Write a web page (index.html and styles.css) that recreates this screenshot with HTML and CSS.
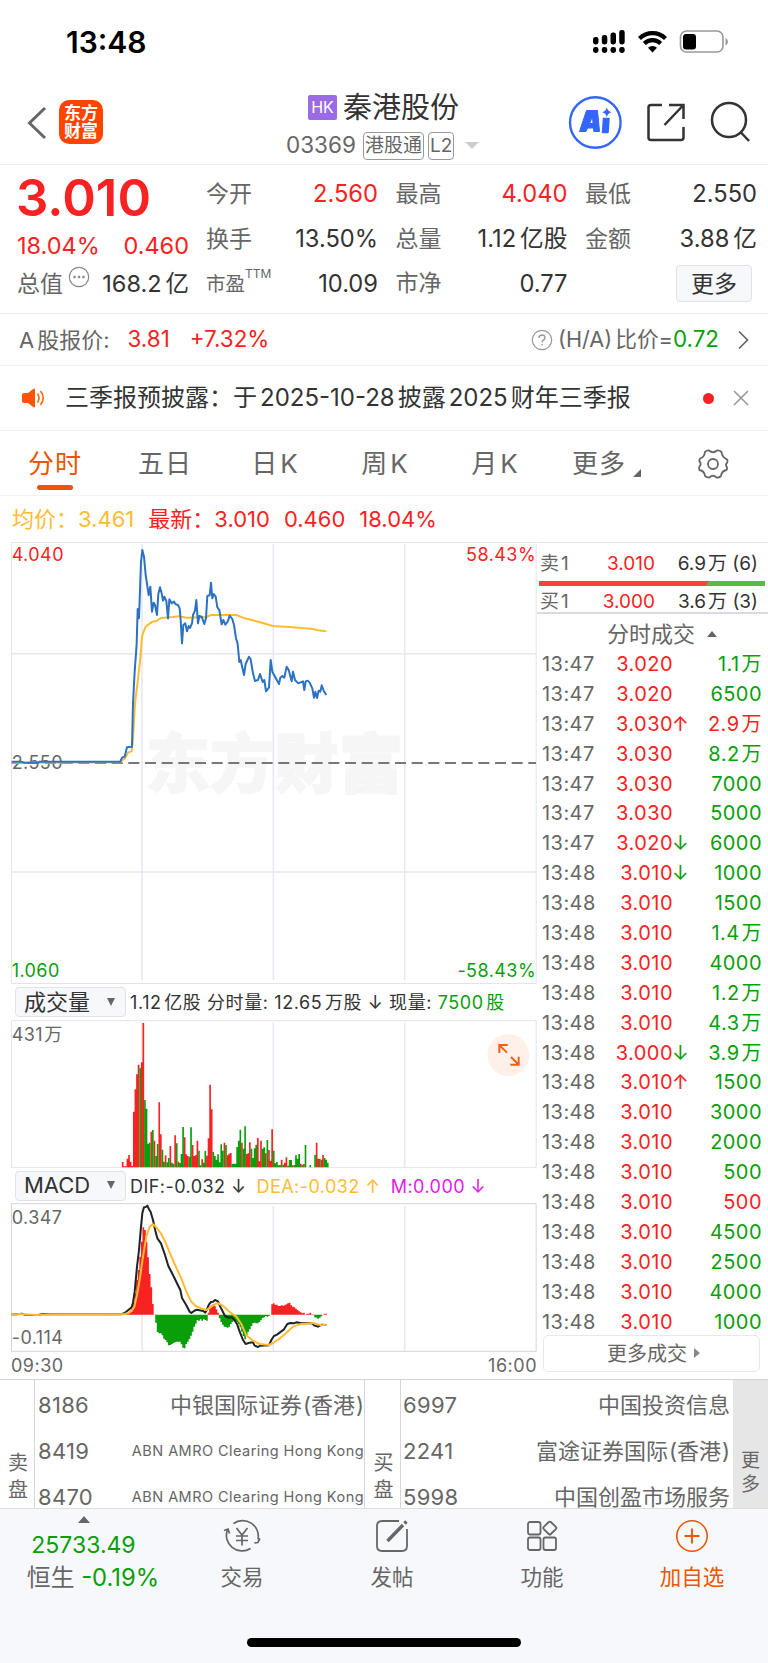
FILE: index.html
```html
<!DOCTYPE html>
<html lang="zh-CN">
<head>
    <meta charset="UTF-8">
    <meta name="viewport" content="width=device-width, initial-scale=1.0">
    <title>秦港股份 03369</title>
    <link rel="stylesheet" href="styles.css">
</head>
<body>

<div class="status-bar">
    <span class="clock">13:48</span>
    <svg class="status-icons" width="140" height="30" viewBox="590 27 140 30">
        <g fill="#000">
            <rect x="593" y="37" width="5.5" height="7.5" rx="2.4"/>
            <rect x="601.8" y="35" width="5.5" height="9.5" rx="2.4"/>
            <rect x="610.5" y="32.5" width="5.5" height="12" rx="2.4"/>
            <rect x="619.2" y="30" width="5.5" height="14.5" rx="2.4"/>
            <rect x="593" y="47" width="5.5" height="6" rx="2.4"/>
            <rect x="601.8" y="47" width="5.5" height="6" rx="2.4"/>
            <rect x="610.5" y="47" width="5.5" height="6" rx="2.4"/>
            <rect x="619.2" y="47" width="5.5" height="6" rx="2.4"/>
            <path d="M652.500 52.500l-4.500-4.700a6.500 6.500 0 0 1 9 0z"/>
            <rect x="683" y="34" width="13" height="15.500" rx="3"/>
        </g>
        <path d="M639.500 38.500a18.500 18.500 0 0 1 26 0M644.300 43.500a11.800 11.800 0 0 1 16.400 0" fill="none" stroke="#000" stroke-width="4.200"/>
        <rect x="680.500" y="31" width="42.500" height="21" rx="6" fill="none" stroke="#999" stroke-width="1.600"/>
        <path d="M725.500 38q2.500 1 2.500 3.700t-2.500 3.700z" fill="#999"/>
    </svg>
</div>

<header class="header">
    <svg class="back" width="20" height="34" viewBox="0 0 20 34"><path d="M18 2L2.500 17 18 32" fill="none" stroke="#666" stroke-width="3"/></svg>
    <div class="logo">东方<br>财富</div>
    <div class="title">
        <div class="title-name"><span class="hk">HK</span>秦港股份</div>
        <div class="title-code">03369<span class="tag">港股通</span><span class="tag tag-l2">L2</span><i class="caret"></i></div>
    </div>
    <svg class="header-icons" width="184" height="58" viewBox="568 94 184 58" fill="none">
        <circle cx="595.300" cy="122.500" r="25.300" stroke="#3366ff" stroke-width="2.400"/>
        <path d="M579.500 131.500L586.500 110.500H597.500L599.500 131.500H593.800L593.500 128H587.500L586 131.500ZM589.600 123.500H593L592.500 116.500Z" fill="#3366ff" fill-rule="evenodd" stroke="#3366ff" stroke-linejoin="round"/>
        <path d="M603.500 118.500H609L608 132.500H602.500Z" fill="#3366ff" stroke="#3366ff" stroke-width="1.500" stroke-linejoin="round"/>
        <path d="M606.800 107.500q1 3.800 4.500 4.700-3.500 1-4.500 4.700-1-3.800-4.500-4.700 3.500-1 4.500-4.700z" fill="#3366ff"/>
        <path d="M662 105h-11q-2.500 0-2.500 2.500v30q0 2.500 2.500 2.500h30q2.500 0 2.500-2.500V127M669 105h14.500v14M683 105.500L664.500 125" stroke="#333" stroke-width="2.500"/>
        <circle cx="729" cy="120" r="17" stroke="#333" stroke-width="2.500"/>
        <path d="M740.500 132l8.500 9" stroke="#333" stroke-width="2.500"/>
    </svg>
</header>

<section class="quote">
    <div class="quote-main">
        <div class="price">3.010</div>
        <div class="change"><span>18.04%</span><span>0.460</span></div>
        <div class="cap">
            <span class="muted">总值</span>
            <svg width="22" height="22" viewBox="0 0 22 22"><circle cx="11" cy="11" r="9.700" fill="none" stroke="#888" stroke-width="1.200"/><g fill="#888"><circle cx="6.500" cy="11" r="1.300"/><circle cx="11" cy="11" r="1.300"/><circle cx="15.500" cy="11" r="1.300"/></g></svg>
            <span class="cap-value">168.2<b>亿</b></span>
        </div>
    </div>
    <dl class="stats">
        <div><dt>今开</dt><dd class="red">2.560</dd></div>
        <div><dt>最高</dt><dd class="red">4.040</dd></div>
        <div><dt>最低</dt><dd>2.550</dd></div>
        <div><dt>换手</dt><dd>13.50%</dd></div>
        <div><dt>总量</dt><dd>1.12<b>亿股</b></dd></div>
        <div><dt>金额</dt><dd>3.88<b>亿</b></dd></div>
        <div><dt class="pe">市盈<sup>TTM</sup></dt><dd>10.09</dd></div>
        <div><dt>市净</dt><dd>0.77</dd></div>
        <div class="more-cell"><button class="more-btn">更多</button></div>
    </dl>
</section>

<section class="a-share">
    <span class="muted a-label">A<b>股报价:</b></span>
    <span class="red a-price">3.81</span>
    <span class="red">+7.32%</span>
    <svg class="help" width="22" height="22" viewBox="0 0 22 22" fill="none" stroke="#999" stroke-width="1.200"><circle cx="11" cy="11" r="9.700"/><path d="M8 9q0-3 3-3t3 2.700q0 1.500-1.600 2.400-1.400.800-1.400 2.300M11 15v1.500" stroke-width="1.400"/></svg>
    <span class="muted ratio">(H/A)<b>比价</b>=</span><span class="green">0.72</span>
    <svg class="chevron" width="12" height="20" viewBox="0 0 12 20"><path d="M2 1.500l8.500 8.500L2 18.500" fill="none" stroke="#666" stroke-width="1.700"/></svg>
</section>

<section class="notice">
    <svg width="25" height="20" viewBox="0 0 25 20"><path d="M1 7q0-2 2-2h4l5.500-4.300q1.500-.700 1.500 1v16.600q0 1.700-1.500 1L7 15H3q-2 0-2-2z" fill="#ff5500"/><path d="M16.500 5.500q3 4.500 0 9M19.500 3q5.500 7 0 14" fill="none" stroke="#ff6a1a" stroke-width="1.700"/></svg>
    <p>三季报预披露：于<b>2025-10-28</b>披露<b>2025</b>财年三季报</p>
    <i class="dot"></i>
    <svg width="16" height="16" viewBox="0 0 16 16"><path d="M1 1l14 14M15 1L1 15" stroke="#999" stroke-width="1.600"/></svg>
</section>

<nav class="tabs">
    <a class="tab active">分时</a>
    <a class="tab">五日</a>
    <a class="tab">日<b>K</b></a>
    <a class="tab">周<b>K</b></a>
    <a class="tab">月<b>K</b></a>
    <a class="tab tab-more">更多<i class="corner"></i></a>
    <svg class="gear" width="32" height="32" viewBox="0 0 32 32" fill="none" stroke="#666" stroke-width="1.800"><path d="M12 2.500Q16 6 20 2.500q2-.700 4.500 1.500.500 5 5.500 7.500 1 1 0 3.500-2 1.500 0 4.500.300 1.500-.500 2.500-5 1-5.500 6-2 2-4.500 1.500-3.500-3.500-7 0-2 .500-4.500-1.500-.500-5-5.500-6-.800-1.500 0-3.500 2.500-2.500 0-5-.500-1.500.500-3 4.500-1.500 5-6.500Q10 2 12 2.500z" stroke-linejoin="round"/><circle cx="16" cy="16" r="5"/></svg>
</nav>

<div class="legend">
    <span class="avg">均价：<b>3.461</b></span>
    <span class="red">最新：<b>3.010</b></span>
    <span class="red">0.460</span>
    <span class="red">18.04%</span>
</div>

<main class="market">
    <div class="charts">
        <!-- chart units are 3 per css pixel -->
        <svg class="chart" width="526" height="442" viewBox="34 156 1578 1326">
            <text class="watermark" x="438" y="892" textLength="772">东方财富</text>
            <path class="grid" d="M427 162V1470M821 162V1470M1215 162V1470M36 491H1609M36 1146H1609"/>
            <path class="frame" d="M35.500 157.500H1609.500V1480.500H35.500z"/>
            <path class="base" d="M36 819H1609"/>
            <text class="axis red" x="36" y="212">4.040</text>
            <text class="axis" x="36" y="836">2.550</text>
            <text class="axis green" x="36" y="1461">1.060</text>
            <text class="axis red" x="1609" y="212" text-anchor="end">58.43%</text>
            <text class="axis green" x="1609" y="1461" text-anchor="end">-58.43%</text>
            <path class="line yellow" d="M36 818L362 817 368 810 376 805 386 787 396 784 400 745 406 640 414 575 422 505 427 440 432 425 438 410 458 395 472 392 484 384 520 381 538 379 560 383 620 381 634 375 710 375 735 385 765 392 820 408 880 412 940 417 955 421 980 424"/>
            <path class="line blue" d="M36 815L66 815 72 818 115 818 120 815 362 815 367 803 375 800 382 772 397 770 400 640 405 545 409 490 411 460 414 357 418 385 420 330 424 215 428 180 433 200 438 255 447 315 452 290 457 365 462 338 466 345 472 375 476 312 481 292 486 310 490 332 494 320 500 333 505 385 509 328 516 340 523 335 528 343 535 345 540 355 543 390 547 460 551 405 557 400 562 424 567 408 571 414 577 400 580 375 586 362 590 330 595 400 599 378 606 380 614 402 619 385 623 318 630 316 634 278 638 325 642 312 648 320 653 352 659 360 666 403 671 390 677 404 684 395 690 377 698 387 703 405 709 445 714 462 719 516 723 510 733 555 738 522 748 500 753 508 760 550 766 573 775 570 781 552 789 576 794 570 799 604 808 592 813 510 818 545 838 582 842 563 848 558 854 563 861 530 867 540 876 574 880 545 886 570 896 580 910 574 914 600 918 574 924 572 930 578 938 595 943 623 947 605 952 624 957 602 962 605 966 586 972 602 980 615"/>
        </svg>

        <div class="indicator indicator-volume">
            <span class="select">成交量<i></i></span>
            <span class="figures">1.12<b>亿股 分时量:</b> 12.65<b>万股</b> ↓ 现量: <em class="green">7500<b>股</b></em></span>
        </div>
        <svg class="chart" width="526" height="148" viewBox="34 178 1578 444">
            <path class="grid" d="M427 186V620M821 186V620M1215 186V620"/>
            <path class="frame" d="M35.500 180H1609.500V621H35.500z"/>
            <g id="volume"></g>
            <text class="axis" x="36" y="241">431<tspan dx="4">万</tspan></text>
            <circle cx="1526" cy="283" r="63" fill="#fff1ea"/>
            <path d="M1499 277V253H1524M1500 254L1522 276M1532 312H1557V288M1556 311L1534 289" fill="none" stroke="#ee6010" stroke-width="6"/>
        </svg>

        <div class="indicator">
            <span class="select">MACD<i></i></span>
            <span class="figures">DIF:-0.032 ↓</span>
            <span class="figures avg">DEA:-0.032 ↑</span>
            <span class="figures magenta">M:0.000 ↓</span>
        </div>
        <svg class="chart" width="526" height="149" viewBox="34 129 1578 447">
            <path class="grid" d="M427 138V572M821 138V572M1215 138V572"/>
            <path class="frame strong" d="M35.500 131H1609.500V574H35.500z"/>
            <g id="macd"></g>
            <path class="line dark" d="M36 464L66 461 75 464 115 465 130 462 365 463 376 458 386 450 396 442 400 428 405 395 412 320 418 270 424 200 428 160 433 142 438 141 443 137 448 148 453 156 460 180 467 212 473 235 484 250 496 285 506 318 520 345 533 372 542 390 547 414 560 436 570 455 575 459 583 453 591 449 600 451 611 453 617 458 621 450 628 433 634 426 640 425 646 420 655 424 660 436 676 468 686 473 697 472 704 480 712 492 720 515 730 540 738 552 750 548 760 547 765 557 775 561 782 557 808 556 815 540 823 528 832 524 845 514 853 508 863 492 872 489 882 490 890 487 905 490 935 489 945 497 955 500 966 494 980 495"/>
            <path class="line yellow" d="M36 465L60 462 110 465 150 463 370 463 385 460 397 452 404 440 412 405 420 360 430 290 440 230 450 200 460 193 470 202 485 222 498 248 515 290 533 330 545 355 560 395 575 425 588 438 605 445 620 450 632 442 645 433 656 430 668 436 690 456 710 470 725 492 740 526 760 542 780 552 808 555 820 549 840 536 860 518 880 500 900 493 940 489 965 496 980 494"/>
            <text class="axis" x="36" y="192">0.347</text>
            <text class="axis" x="36" y="553">-0.114</text>
        </svg>
        <div class="times"><span>09:30</span><span>16:00</span></div>
    </div>

    <aside class="side">
        <div class="book">
            <div class="book-row"><span class="muted">卖<b>1</b></span><span class="red">3.010</span><span>6.9<b>万</b> (6)</span></div>
            <div class="ratio-bar"></div>
            <div class="book-row"><span class="muted">买<b>1</b></span><span class="red">3.000</span><span>3.6<b>万</b> (3)</span></div>
        </div>
        <div class="trades-title">分时成交<i></i></div>
        <ul class="trades">
            <li><time>13:47</time><span>3.020</span><em class="green">1.1<b>万</b></em></li>
            <li><time>13:47</time><span>3.020</span><em class="green">6500</em></li>
            <li><time>13:47</time><span class="up">3.030</span><em class="red">2.9<b>万</b></em></li>
            <li><time>13:47</time><span>3.030</span><em class="green">8.2<b>万</b></em></li>
            <li><time>13:47</time><span>3.030</span><em class="green">7000</em></li>
            <li><time>13:47</time><span>3.030</span><em class="green">5000</em></li>
            <li><time>13:47</time><span class="down">3.020</span><em class="green">6000</em></li>
            <li><time>13:48</time><span class="down">3.010</span><em class="green">1000</em></li>
            <li><time>13:48</time><span>3.010</span><em class="green">1500</em></li>
            <li><time>13:48</time><span>3.010</span><em class="green">1.4<b>万</b></em></li>
            <li><time>13:48</time><span>3.010</span><em class="green">4000</em></li>
            <li><time>13:48</time><span>3.010</span><em class="green">1.2<b>万</b></em></li>
            <li><time>13:48</time><span>3.010</span><em class="green">4.3<b>万</b></em></li>
            <li><time>13:48</time><span class="down">3.000</span><em class="green">3.9<b>万</b></em></li>
            <li><time>13:48</time><span class="up">3.010</span><em class="green">1500</em></li>
            <li><time>13:48</time><span>3.010</span><em class="green">3000</em></li>
            <li><time>13:48</time><span>3.010</span><em class="green">2000</em></li>
            <li><time>13:48</time><span>3.010</span><em class="green">500</em></li>
            <li><time>13:48</time><span>3.010</span><em class="red">500</em></li>
            <li><time>13:48</time><span>3.010</span><em class="green">4500</em></li>
            <li><time>13:48</time><span>3.010</span><em class="green">2500</em></li>
            <li><time>13:48</time><span>3.010</span><em class="green">4000</em></li>
            <li><time>13:48</time><span>3.010</span><em class="green">1000</em></li>
        </ul>
        <button class="more-trades">更多成交<i></i></button>
    </aside>
</main>

<section class="brokers">
    <div class="broker-side">卖<br>盘</div>
    <ul class="broker-list">
        <li><span>8186</span><em>中银国际证券<b>(</b>香港<b>)</b></em></li>
        <li><span>8419</span><small>ABN AMRO Clearing Hong Kong</small></li>
        <li><span>8470</span><small>ABN AMRO Clearing Hong Kong</small></li>
    </ul>
    <div class="broker-side">买<br>盘</div>
    <ul class="broker-list buy">
        <li><span>6997</span><em>中国投资信息</em></li>
        <li><span>2241</span><em>富途证券国际<b>(</b>香港<b>)</b></em></li>
        <li><span>5998</span><em>中国创盈市场服务</em></li>
    </ul>
    <div class="broker-more">更<br>多</div>
</section>

<footer class="footer">
    <div class="index">
        <i></i>
        <div class="green index-value">25733.49</div>
        <div class="index-change">恒生 <span class="green">-0.19%</span></div>
    </div>
    <a class="action">
        <svg width="38" height="34" viewBox="0 0 38 34" fill="none" stroke="#666" stroke-width="1.700"><path d="M10.500 4.500A15.700 15.700 0 0 1 35 20.500M27.500 29.500A15.700 15.700 0 0 1 4.500 10.500M1 11.500L5 10l1.500 4.500M37 19.500l-2.200 4-3.500.500M13.500 9l5.500 7 5.500-7M19 16v10.500M13 17h12M13 21.500h12"/></svg>
        交易
    </a>
    <a class="action">
        <svg width="34" height="34" viewBox="0 0 34 34" fill="none" stroke="#666" stroke-width="1.800"><path d="M24 2H7Q2 2 2 7v20q0 5 5 5h20q5 0 5-5V10"/><path d="M12.500 22L28 6M29.500 4.500L31.500 2.500" stroke-width="3.400"/></svg>
        发帖
    </a>
    <a class="action">
        <svg width="34" height="34" viewBox="0 0 34 34" fill="none" stroke="#666" stroke-width="1.800"><rect x="3" y="3" width="12.500" height="12.500" rx="2"/><rect x="3" y="18.500" width="12.500" height="12.500" rx="2"/><rect x="18.500" y="18.500" width="12.500" height="12.500" rx="2"/><rect x="19.800" y="4" width="10" height="10" rx="1.500" transform="rotate(45 24.800 9)"/></svg>
        功能
    </a>
    <a class="action add">
        <svg width="34" height="34" viewBox="0 0 34 34" fill="none" stroke="#ee5500" stroke-width="1.600"><circle cx="17" cy="17" r="15.200"/><path d="M17 9.500v15M9.500 17h15" stroke-width="1.900"/></svg>
        加自选
    </a>
    <div class="home-bar"></div>
</footer>

<script src="script.js"></script>
</body>
</html>
```
FILE: styles.css
```css
* {
    margin: 0;
    padding: 0;
    box-sizing: border-box;
}

body {
    width: 768px;
    height: 1663px;
    overflow: hidden;
    background: #fff;
    color: #333;
    font-family: Inter, "Noto Sans CJK SC", sans-serif;
    font-size: 23px;
    line-height: 1;
}

b, em, i {
    font-weight: inherit;
    font-style: normal;
}

ul {
    list-style: none;
}

button {
    font-family: inherit;
    color: inherit;
}

svg {
    display: block;
    flex: none;
}

.red { color: #f82222; }
.green { color: #0a9f0a; }
.muted { color: #666; }
.avg { color: #ffbb33; }
.magenta { color: #e020e8; }

/* Status bar */
.status-bar {
    display: flex;
    justify-content: space-between;
    height: 84px;
    padding: 27px 38px 0 66px;
}

.clock {
    font-size: 30px;
    font-weight: 600;
    line-height: 30px;
    color: #000;
}

/* Header */
.header {
    display: grid;
    grid-template-columns: 32px 44px 1fr 184px;
    height: 81px;
    padding: 0 16px 0 27px;
    border-bottom: 1px solid #eaeaea;
}

.back {
    margin-top: 22px;
}

.logo {
    height: 44px;
    margin-top: 16px;
    padding-top: 4px;
    border-radius: 10px;
    background: #ff4400;
    color: #fff;
    font-size: 17px;
    font-weight: 700;
    line-height: 18px;
    text-align: center;
}

.title-name {
    display: flex;
    align-items: center;
    height: 46px;
    padding-left: 205px;
    font-size: 29px;
}

.hk {
    width: 29px;
    height: 25px;
    margin-right: 6px;
    border-radius: 2px;
    background: #9b6be6;
    color: #fff;
    font-size: 16px;
    line-height: 25px;
    text-align: center;
}

.title-code {
    display: flex;
    align-items: center;
    height: 31px;
    padding-left: 183px;
    font-size: 22.500px;
    color: #666;
}

.tag {
    height: 28px;
    margin-left: 7px;
    padding: 0 1px;
    border: 1px solid #999;
    border-radius: 4px;
    font-size: 19px;
    line-height: 26px;
    white-space: nowrap;
}

.tag-l2 {
    margin-left: 4px;
}

.caret {
    margin-left: 11px;
    border: 7px solid transparent;
    border-top-color: #ccc;
    border-bottom: 0;
}

.header-icons {
    margin-top: 10px;
}

/* Quote */
.quote {
    display: flex;
    height: 149px;
    border-bottom: 1px solid #eaeaea;
}

.quote-main {
    width: 206px;
    padding: 5px 17px 0;
}

.price {
    margin-left: -1px;
    font-size: 51px;
    font-weight: 600;
    line-height: 56px;
    color: #f82222;
}

.change {
    display: flex;
    justify-content: space-between;
    font-size: 23.500px;
    line-height: 40px;
    color: #f82222;
}

.cap {
    display: flex;
    line-height: 36px;
}

.cap svg {
    margin: 0 0 0 5px;
}

.cap-value {
    margin-left: auto;
    font-size: 23.500px;
}

.stats {
    display: grid;
    grid-template-columns: repeat(3, 171px);
    grid-auto-rows: 44.700px;
    column-gap: 18.500px;
    padding-top: 7px;
}

.stats div {
    display: flex;
    align-items: center;
    justify-content: space-between;
    white-space: nowrap;
}

.stats dt {
    color: #666;
}

.stats dd {
    margin-right: -1px;
    font-size: 23.700px;
}

.stats .pe {
    font-size: 19.500px;
}

.pe sup {
    position: relative;
    top: -5px;
    font-size: 12px;
}

.stats b, .cap-value b {
    margin-left: 4px;
}

.stats .more-cell {
    justify-content: flex-end;
    padding-right: 4px;
}

.more-btn {
    width: 76px;
    height: 37px;
    border: 1px solid #e0e2e6;
    border-radius: 4px;
    background: #f7f8fb;
    font-size: 23px;
    line-height: 32px;
}

/* A share */
.a-share {
    display: flex;
    align-items: center;
    height: 52px;
    padding: 0 19px;
    border-bottom: 1px solid #f2f2f2;
    font-size: 22.400px;
}

.a-label {
    font-size: 22px;
}

.a-label b {
    margin-left: 3px;
}

.a-price {
    margin: 0 20px 0 18px;
}

.help {
    margin-left: auto;
    margin-right: 5px;
}

.ratio {
    font-size: 21.700px;
}

.ratio b {
    margin-left: 3px;
}

.chevron {
    margin-left: 18px;
}

/* Notice */
.notice {
    display: flex;
    align-items: center;
    height: 65px;
    padding: 0 19px 0 21px;
    border-bottom: 1px solid #f2f2f2;
    font-size: 24px;
}

.notice p {
    flex: 1;
    margin-left: 19px;
    white-space: nowrap;
}

.notice b {
    margin: 0 3px;
}

.dot {
    width: 11px;
    height: 11px;
    margin-right: 19px;
    border-radius: 50%;
    background: #f82222;
}

/* Tabs */
.tabs {
    display: grid;
    grid-template-columns: repeat(5, 110px) 1fr 71px;
    align-items: center;
    height: 65px;
    border-bottom: 1px solid #f2f2f2;
}

.tab {
    position: relative;
    font-size: 26px;
    line-height: 65px;
    letter-spacing: 1px;
    color: #666;
    text-align: center;
}

.tab b {
    margin-left: 2px;
}

.tab-more {
    padding-left: 22px;
    text-align: left;
}

.active {
    color: #ee5500;
}

.active::after {
    content: "";
    position: absolute;
    left: 37px;
    bottom: 6px;
    width: 36px;
    height: 5px;
    border-radius: 3px;
    background: #ee5500;
}

.corner {
    display: inline-block;
    margin-left: 7px;
    border-left: 8px solid transparent;
    border-bottom: 8px solid #666;
    vertical-align: -4px;
}

/* Legend */
.legend {
    display: flex;
    align-items: center;
    gap: 14px;
    height: 46px;
    padding-left: 12px;
    font-size: 22px;
}

/* Charts */
.market {
    display: flex;
    height: 837px;
}

.charts {
    width: 526px;
    margin-left: 11px;
}

.frame {
    fill: none;
    stroke: #e2e4ea;
    stroke-width: 3;
}

.strong {
    stroke: #d4d6de;
}

.grid {
    stroke: #e6e8ef;
    stroke-width: 4.500;
}

.base {
    stroke: #777;
    stroke-width: 6;
    stroke-dasharray: 33 17;
}

.line {
    fill: none;
    stroke-width: 6;
    stroke-linejoin: round;
}

.yellow { stroke: #ffbb33; }
.blue { stroke: #2b72c4; }
.dark { stroke: #222; }
.bar-red { stroke: #f82222; }
.bar-green { stroke: #0a9f0a; }

.axis {
    fill: #666;
    font-size: 54px;
    letter-spacing: 1.300px;
}

.axis.red { fill: #f82222; }
.axis.green { fill: #0a9f0a; }

.watermark {
    fill: #f6f6f6;
    stroke: #f6f6f6;
    stroke-width: 5;
    font-size: 192px;
    font-weight: 900;
}

.indicator {
    display: flex;
    align-items: center;
    height: 35px;
    font-size: 18px;
    letter-spacing: .450px;
}

.indicator-volume {
    height: 36px;
}

.select {
    display: flex;
    align-items: center;
    justify-content: space-between;
    width: 111px;
    height: 30px;
    margin: 0 4px;
    padding: 0 10px 1px 8px;
    border: 1px solid #e0e2e6;
    border-radius: 4px;
    background: #f7f8fb;
    font-size: 22px;
    letter-spacing: 0;
}

.select i {
    border: 4.500px solid transparent;
    border-top: 8px solid #666;
    border-bottom: 0;
}

.figures {
    margin-right: 10px;
    padding-top: 2px;
    white-space: nowrap;
}

.indicator-volume .figures {
    letter-spacing: .600px;
}

.figures b {
    margin-left: 2.500px;
}

.times {
    display: flex;
    justify-content: space-between;
    height: 27px;
    padding-top: 5px;
    font-size: 18px;
    letter-spacing: .500px;
    color: #666;
}

/* Order book and trades */
.side {
    flex: 1;
}

.book {
    height: 72px;
    padding: 2px 3px 0 2px;
    border-top: 1px solid #e2e4ea;
    border-bottom: 2px solid #d9dae3;
    font-size: 19px;
}

.book-row {
    display: grid;
    grid-template-columns: 40px 75px 1fr;
    align-items: center;
    height: 36px;
    padding: 0 7px 0 1px;
    text-align: right;
    white-space: nowrap;
}

.book-row .muted {
    text-align: left;
}

.book-row b {
    margin-left: 2px;
}

.book-row + .ratio-bar + .book-row {
    height: 28px;
    padding-top: 2px;
}

.ratio-bar {
    height: 5px;
    background: linear-gradient(120deg, #ee4444 74%, #5cb944 74.300%);
}

.trades-title {
    display: flex;
    align-items: center;
    gap: 12px;
    height: 35px;
    padding: 5px 0 0 70px;
    font-size: 22px;
    color: #666;
}

.trades-title i {
    border: 5px solid transparent;
    border-top: 0;
    border-bottom: 6px solid #666;
}

.trades li {
    display: grid;
    grid-template-columns: 60px 76px 1fr;
    align-items: center;
    height: 29.900px;
    padding: 0 6px 0 0;
    font-size: 20px;
    letter-spacing: .450px;
    text-align: right;
}

.trades time {
    padding-left: 5px;
    color: #666;
    text-align: left;
}

.trades span {
    position: relative;
    color: #f82222;
}

.trades b {
    margin-left: 2px;
}

.up::after, .down::after {
    content: "↑";
    position: absolute;
    left: 100%;
    margin-left: -1px;
}

.down::after {
    content: "↓";
    color: #0a9f0a;
}

.more-trades {
    display: flex;
    align-items: center;
    justify-content: center;
    gap: 7px;
    width: 217px;
    height: 37px;
    margin: -1px 0 0 6px;
    padding: 0 0 2px 4px;
    border: 1px solid #e6e8ec;
    border-radius: 5px;
    background: #fff;
    color: #666;
    font-size: 20px;
}

.more-trades i {
    border: 5px solid transparent;
    border-left: 6px solid #888;
    border-right: 0;
}

/* Brokers */
.brokers {
    display: grid;
    grid-template-columns: 35px 330px 36px 332px 1fr;
    height: 129px;
    overflow: hidden;
    border-top: 1px solid #d4d6de;
    color: #666;
}

.broker-side {
    padding: 70px 0 0 2px;
    border-right: 1px solid #d4d6de;
    font-size: 20px;
    line-height: 27px;
    text-align: center;
}

.broker-list {
    padding-top: 2px;
    border-right: 1px solid #d4d6de;
}

.broker-list li {
    display: flex;
    align-items: center;
    justify-content: space-between;
    height: 46px;
    padding-left: 3px;
    font-size: 22px;
    white-space: nowrap;
}

.broker-list span {
    letter-spacing: .300px;
}

.broker-list.buy {
    padding-right: 3px;
    border-right: 0;
}

.buy li {
    padding-left: 2px;
}

.broker-list em b {
    margin-left: 1px;
}

.broker-list small {
    font-size: 14.500px;
    letter-spacing: .450px;
}

.broker-more {
    padding-top: 69px;
    background: #e6e6e6;
    font-size: 19px;
    line-height: 24px;
    text-align: center;
}

/* Footer */
.footer {
    position: relative;
    display: grid;
    grid-template-columns: 167px repeat(4, 150px);
    height: 155px;
    border-top: 1px solid #dcdee4;
    background: #f7f8fb;
    color: #666;
}

.index {
    display: flex;
    flex-direction: column;
    align-items: center;
    padding-top: 7px;
}

.index i {
    border: 6px solid transparent;
    border-top: 0;
    border-bottom: 7px solid #666;
}

.index-value {
    margin-top: 11px;
}

.index-change {
    margin: 9px 0 0 19px;
    font-size: 23.800px;
}

.action {
    display: flex;
    flex-direction: column;
    align-items: center;
    gap: 14px;
    padding-top: 10px;
    font-size: 21.500px;
}

.add {
    color: #ee5500;
}

.home-bar {
    position: absolute;
    left: 247px;
    bottom: 16px;
    width: 274px;
    height: 9px;
    border-radius: 5px;
    background: #000;
}
```
FILE: script.js
```js
// One bar per minute. Volume is the bar height, negative means a falling minute.
const volume = [
    16, 3, 3, 26, 37, 17, 4, 167, 234, 279, 308, -298, 315, 433, -202, -176, -71, -74, 107, -112,
    80, -34, -70, 195, 99, -53, -17, 36, -15, -28, 64, -14, -11, 96, -72, 17, -13, -40, -121, 90,
    39, 34, -32, -120, 67, 34, 36, 80, -50, -6, 24, -14, -49, 35, 87, 248, 174, -46, -34, -23,
    -39, -15, -69, -50, 74, -67, 36, 41, 43, -11, -11, -11, -61, -80, -113, 74, -56, -123, 40, 42,
    75, -56, -28, -57, -68, 88, 18, 80, -56, -60, 42, -82, 52, 20, 114, -50, -12, -16, -6, -7,
    23, -8, 14, 30, -5, -22, -22, 6, -7, -36, -26, -40, 11, -8, 10, -67, 0, 0, -7, 0,
    0, -37, 74, 26, -26, 23, 37, -28, -23, -14
];

// MACD histogram around the zero line
const macd = [
    1, 1, 2, 3, 8, 12, 19, 34, 64, 104, 134, 174, 219, 262, 254, 219, 172, 122, 82, 32,
    -1, -24, -52, -56, -56, -62, -72, -76, -83, -92, -91, -88, -85, -83, -81, -81, -81, -89, -99, -101,
    -88, -81, -73, -63, -51, -36, -27, -16, -18, -14, -18, -14, -16, -18, 6, 19, 28, 31, 26, 16,
    6, -11, -22, -30, -36, -37, -39, -36, -28, -22, -18, -20, -23, -29, -38, -51, -64, -74, -64, -51,
    -44, -34, -26, -24, -26, -26, -22, -17, -10, -8, -4, -6, -4, 0, 31, 34, 30, 30, 26, 26,
    28, 27, 28, 31, 34, 36, 28, 24, 22, 18, 14, 10, 7, 4, 6, 0, 3, 3, 6, 1,
    -2, -8, -9, -12, -9, -5, 0, 3, 3
];

const START = 369;
const STEP = 4.77;

function drawBars(id, data, zero, mirrored) {
    let up = "";
    let down = "";
    data.forEach((value, i) => {
        if (!value) return;
        const x = (START + i * STEP).toFixed(1);
        const height = mirrored ? value : Math.abs(value);
        const bar = `M${x} ${zero}v${-height}`;
        if (value > 0) up += bar;
        else down += bar;
    });
    document.getElementById(id).innerHTML =
        `<path class="bar-red" stroke-width="5" d="${up}"/><path class="bar-green" stroke-width="5" d="${down}"/>`;
}

drawBars("volume", volume, 620, false);
drawBars("macd", macd, 464, true);
```
